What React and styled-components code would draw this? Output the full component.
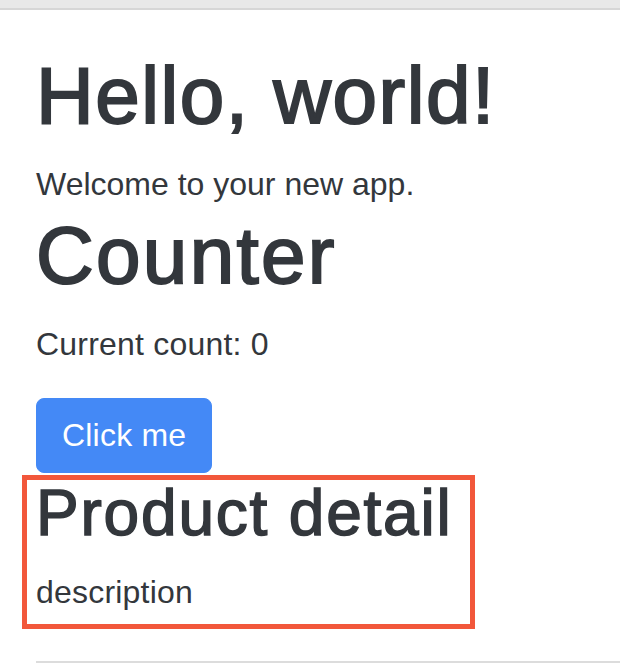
import React, { useState } from 'react';
import styled, { createGlobalStyle } from 'styled-components';

const GlobalStyle = createGlobalStyle`
  body {
    margin: 0;
    background: #ffffff;
    color: #33373c;
    font-family: "Liberation Sans", Arial, sans-serif;
  }
`;

const TopBar = styled.div`
  height: 8px;
  background: #e8e8e8;
  border-bottom: 2px solid #d6d6d6;
`;

const Main = styled.main`
  padding: 38px 0 0 36px;
`;

// headings imitate a medium weight: regular glyphs thickened by a thin stroke
const Title = styled.h1`
  margin: 0 0 16px;
  font-size: 80px;
  line-height: 96px;
  font-weight: 400;
  -webkit-text-stroke: 2px currentColor;
  letter-spacing: ${props => props.$spacing || '0'};
`;

const Line = styled.div`
  font-size: 32px;
  line-height: 48px;
`;

const Text = styled.p`
  margin: 0 0 30px;
  font-size: 32px;
  line-height: 48px;
  letter-spacing: 0.2px;
`;

const Button = styled.button`
  display: block;
  margin: 0;
  padding: 12px 25px 13px;
  border: 1px solid #4489f6;
  border-radius: 8px;
  background: #4489f6;
  color: #ffffff;
  font-family: inherit;
  font-size: 32px;
  line-height: 48px;
  letter-spacing: 0.2px;
  cursor: pointer;
`;

const Detail = styled.section`
  position: relative;
  margin-top: 2px;

  &::after {
    content: '';
    position: absolute;
    top: 0;
    left: -14px;
    width: 453px;
    bottom: -13px;
    box-sizing: border-box;
    border: 5px solid #f2573b;
    pointer-events: none;
  }
`;

const SubTitle = styled.h2`
  margin: 0 0 16px;
  font-size: 64px;
  line-height: 77px;
  font-weight: 400;
  -webkit-text-stroke: 1.5px currentColor;
  letter-spacing: 1.8px;
`;

const Description = styled.p`
  margin: 0;
  font-size: 32px;
  line-height: 48px;
  letter-spacing: 0.2px;
`;

const Rule = styled.div`
  margin-top: 45px;
  border-top: 2px solid #dcdcdc;
`;

export default function App() {
  const [count, setCount] = useState(0);

  return (
    <>
      <GlobalStyle />
      <TopBar />
      <Main>
        <Title $spacing="1.5px">Hello, world!</Title>
        <Line>Welcome to your new app.</Line>
        <Title $spacing="2.3px">Counter</Title>
        <Text>Current count: {count}</Text>
        <Button onClick={() => setCount(count + 1)}>Click me</Button>
        <Detail>
          <SubTitle>Product detail</SubTitle>
          <Description>description</Description>
        </Detail>
        <Rule />
      </Main>
    </>
  );
}
